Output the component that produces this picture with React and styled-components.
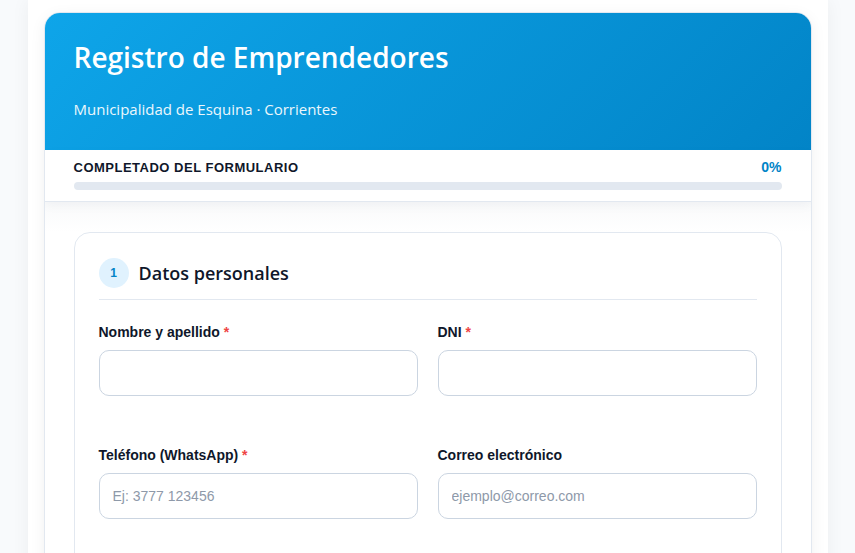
import styled, { createGlobalStyle } from "styled-components";

const GlobalStyle = createGlobalStyle`
    * { box-sizing: border-box; }
    html, body {
        margin: 0;
        background: #f8fafc;
        font-family: "Liberation Sans", Arial, sans-serif;
        color: #0f172a;
    }
`;

const Page = styled.div`
    width: 800px;
    margin: 0 auto;
    min-height: 100vh;
    background: #ffffff;
    padding: 12px 16px 40px;
    box-shadow: 0 0 18px rgba(15, 23, 42, 0.05);
`;

const Card = styled.div`
    border: 1px solid #e2e8f0;
    border-radius: 16px;
    overflow: hidden;
    background: #ffffff;
    box-shadow: 0 4px 16px rgba(15, 23, 42, 0.06);
`;

const Header = styled.header`
    background: linear-gradient(135deg, #0ea5e9 0%, #0284c7 100%);
    color: #ffffff;
    padding: 28px 29px 30px;
    height: 138px;
    margin-top: -1px;
`;

const Title = styled.h1`
    margin: 0;
    font-family: "Open Sans", sans-serif;
    font-size: 28px;
    font-weight: 600;
    line-height: 34px;
`;

const Subtitle = styled.p`
    margin: 25px 0 0;
    font-family: "Open Sans", sans-serif;
    font-size: 15px;
    line-height: 20px;
    opacity: 0.92;
`;

const ProgressWrap = styled.div`
    padding: 9px 29px 11px;
    border-bottom: 1px solid #e2e8f0;
    box-shadow: 0 4px 10px rgba(15, 23, 42, 0.04);
    position: relative;
`;

const ProgressTop = styled.div`
    display: flex;
    justify-content: space-between;
    align-items: center;
    margin-bottom: 7px;
`;

const ProgressLabel = styled.span`
    font-size: 13px;
    font-weight: 800;
    letter-spacing: 0.5px;
    text-transform: uppercase;
    color: #0f172a;
`;

const ProgressValue = styled.span`
    font-size: 14px;
    font-weight: 700;
    color: #0284c7;
`;

const Track = styled.div`
    height: 8px;
    border-radius: 4px;
    background: #e2e8f0;
    overflow: hidden;
`;

const Fill = styled.div`
    height: 100%;
    background: #0284c7;
    border-radius: 4px;
`;

const Body = styled.div`
    padding: 30px 29px 30px;
    background: linear-gradient(#f9fafb, #ffffff 30px);
`;

const Section = styled.section`
    border: 1px solid #e2e8f0;
    border-radius: 16px;
    padding: 25px 24px 24px;
    background: #ffffff;
`;

const SectionHead = styled.div`
    display: flex;
    align-items: center;
    gap: 10px;
    padding-bottom: 11px;
    border-bottom: 1px solid #e2e8f0;
    margin-bottom: 24px;
`;

const StepBadge = styled.span`
    width: 30px;
    height: 30px;
    border-radius: 50%;
    background: #e0f2fe;
    color: #0284c7;
    font-size: 12px;
    font-weight: 600;
    display: flex;
    align-items: center;
    justify-content: center;
`;

const SectionTitle = styled.h2`
    margin: 0;
    font-family: "Open Sans", sans-serif;
    font-size: 18px;
    font-weight: 600;
    color: #0f172a;
`;

const Grid = styled.div`
    display: grid;
    grid-template-columns: 1fr 1fr;
    column-gap: 20px;
    row-gap: 51px;
`;

const Field = styled.div`
    display: flex;
    flex-direction: column;
    gap: 10px;
`;

const Label = styled.label`
    font-size: 14px;
    font-weight: 700;
    line-height: 16px;
    color: #0f172a;
`;

const Required = styled.span`
    color: #ef4444;
`;

const Input = styled.input`
    height: 46px;
    border: 1px solid #cbd5e1;
    border-radius: 10px;
    padding: 0 13px;
    font-family: "Liberation Sans", Arial, sans-serif;
    font-size: 14px;
    color: #0f172a;
    background: #ffffff;
    outline: none;
    &::placeholder {
        color: #8e99a9;
    }
`;

const fields = [
    { label: "Nombre y apellido", required: true, placeholder: "" },
    { label: "DNI", required: true, placeholder: "" },
    { label: "Teléfono (WhatsApp)", required: true, placeholder: "Ej: 3777 123456" },
    { label: "Correo electrónico", required: false, placeholder: "ejemplo@correo.com" },
    { label: "Domicilio", required: true, placeholder: "Calle y número" },
    { label: "Barrio", required: false, placeholder: "" },
];

export default function App() {
    const progress = 0;

    return (
        <>
            <GlobalStyle />
            <Page>
                <Card>
                    <Header>
                        <Title>Registro de Emprendedores</Title>
                        <Subtitle>Municipalidad de Esquina · Corrientes</Subtitle>
                    </Header>
                    <ProgressWrap>
                        <ProgressTop>
                            <ProgressLabel>Completado del formulario</ProgressLabel>
                            <ProgressValue>{progress}%</ProgressValue>
                        </ProgressTop>
                        <Track>
                            <Fill style={{ width: `${progress}%` }} />
                        </Track>
                    </ProgressWrap>
                    <Body>
                        <Section>
                            <SectionHead>
                                <StepBadge>1</StepBadge>
                                <SectionTitle>Datos personales</SectionTitle>
                            </SectionHead>
                            <Grid>
                                {fields.map((f) => (
                                    <Field key={f.label}>
                                        <Label>
                                            {f.label}
                                            {f.required && <Required> *</Required>}
                                        </Label>
                                        <Input type="text" placeholder={f.placeholder} />
                                    </Field>
                                ))}
                            </Grid>
                        </Section>
                    </Body>
                </Card>
            </Page>
        </>
    );
}
